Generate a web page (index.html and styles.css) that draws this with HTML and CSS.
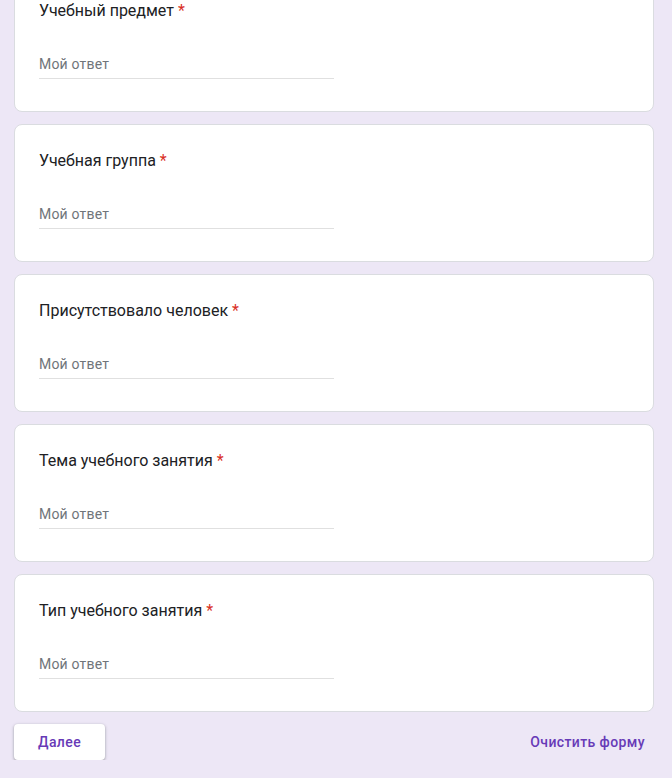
FILE: index.html
```html
<!DOCTYPE html>
<html lang="ru">
<head>
    <meta charset="UTF-8">
    <title>Форма</title>
    <link rel="stylesheet" href="styles.css">
</head>
<body>

    <div class="form">

        <!-- Вопросы -->
        <div class="card">
            <div class="question">Учебный предмет <span class="req">*</span></div>
            <input class="answer" type="text" placeholder="Мой ответ">
        </div>

        <div class="card">
            <div class="question">Учебная группа <span class="req">*</span></div>
            <input class="answer" type="text" placeholder="Мой ответ">
        </div>

        <div class="card">
            <div class="question">Присутствовало человек <span class="req">*</span></div>
            <input class="answer" type="text" placeholder="Мой ответ">
        </div>

        <div class="card">
            <div class="question">Тема учебного занятия <span class="req">*</span></div>
            <input class="answer" type="text" placeholder="Мой ответ">
        </div>

        <div class="card">
            <div class="question">Тип учебного занятия <span class="req">*</span></div>
            <input class="answer" type="text" placeholder="Мой ответ">
        </div>

        <!-- Кнопки -->
        <div class="actions">
            <button class="btn-next">Далее</button>
            <button class="btn-clear">Очистить форму</button>
        </div>

    </div>

</body>
</html>
```

FILE: styles.css
```css
html, body {
    margin: 0;
    padding: 0;
}
body {
    font-family: Roboto, "Noto Sans", Arial, sans-serif;
    background-color: #ede7f6;
    overflow: hidden;
}
.form {
    width: 640px;
    margin: -26px 0 0 14px;
}
.card {
    background-color: #ffffff;
    border: 1px solid #dadce0;
    border-radius: 8px;
    padding: 24px 24px 32px;
    margin-bottom: 12px;
}
.question {
    font-size: 16px;
    line-height: 24px;
    color: #202124;
}
.req {
    color: #d93025;
}
.answer {
    display: block;
    box-sizing: border-box;
    width: 50%;
    margin-top: 24px;
    padding: 8px 0 5px;
    height: 32px;
    border: none;
    border-bottom: 1px solid #e0e0e0;
    outline: none;
    font-family: inherit;
    font-size: 14px;
    line-height: 18px;
    color: #202124;
    background: transparent;
}
.answer::placeholder {
    color: #70757a;
    letter-spacing: 0.2px;
}
.actions {
    display: flex;
    justify-content: space-between;
    align-items: center;
}
button {
    font-family: inherit;
    font-size: 14px;
    font-weight: 500;
    letter-spacing: 0.4px;
    color: #673ab7;
    height: 36px;
    border: none;
    border-radius: 4px;
    cursor: pointer;
}
.btn-next {
    background-color: #ffffff;
    padding: 0 24px;
    min-width: 91px;
    box-shadow: 0 1px 2px rgba(60, 64, 67, 0.3), 0 1px 3px 1px rgba(60, 64, 67, 0.15);
}
.btn-clear {
    background: transparent;
    padding: 0 9px;
}
```
